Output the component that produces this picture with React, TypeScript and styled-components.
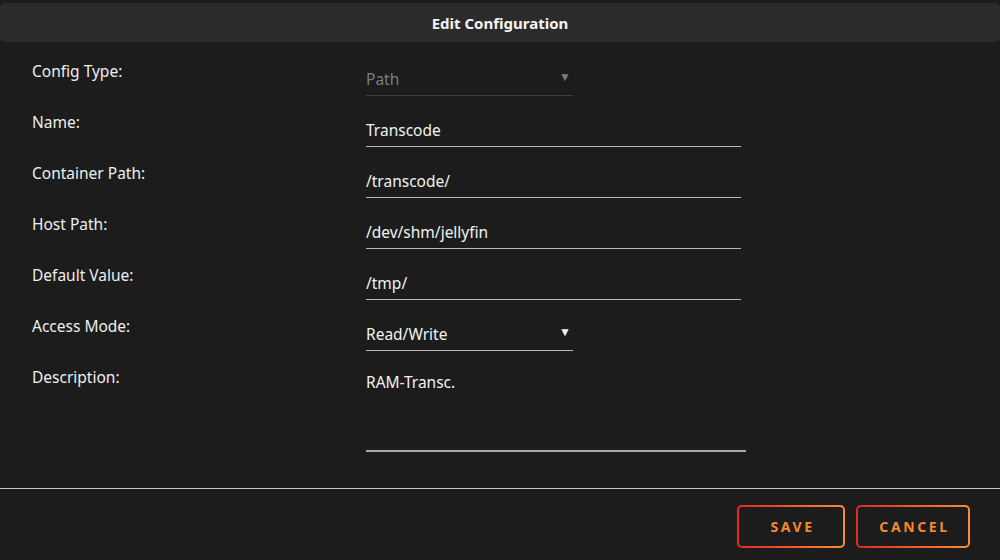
import React from "react";
import styled, { createGlobalStyle } from "styled-components";

const Global = createGlobalStyle`
  html, body { margin: 0; padding: 0; background: #1c1c1c; }
  body { font-family: "Noto Sans", "Open Sans", sans-serif; color: #f2f2f2; }
  * { box-sizing: border-box; }
`;

const Page = styled.div`
  width: 1000px;
  height: 560px;
  background: #1c1c1c;
  padding-top: 3px;
  display: flex;
  flex-direction: column;
`;

const Header = styled.div`
  height: 39px;
  background: #2b2b2b;
  border-radius: 5px;
  display: flex;
  align-items: center;
  justify-content: center;
  font-size: 15px;
  font-weight: 700;
  color: #f4f4f4;
`;

const Form = styled.div`
  padding: 20px 0 0 32px;
  display: flex;
  flex-direction: column;
  gap: 17px;
`;

const Row = styled.div`
  display: grid;
  grid-template-columns: 334px auto;
  align-items: start;
`;

const Label = styled.div`
  font-size: 15.5px;
  line-height: 18px;
  color: #eeeeee;
`;

const Field = styled.div<{ $w: number; $disabled?: boolean }>`
  width: ${(p) => p.$w}px;
  height: 34px;
  border-bottom: 1px solid ${(p) => (p.$disabled ? "#3e3e3e" : "#b8b8b8")};
  display: flex;
  align-items: center;
  justify-content: space-between;
  font-size: 15.5px;
  line-height: 20px;
  color: ${(p) => (p.$disabled ? "#7c7c7c" : "#f2f2f2")};
`;

const Arrow = styled.span<{ $disabled?: boolean }>`
  font-size: 12px;
  margin-right: 2px;
  margin-top: -3px;
  color: ${(p) => (p.$disabled ? "#7c7c7c" : "#f2f2f2")};
`;

const TextArea = styled.div`
  width: 380px;
  height: 84px;
  border-bottom: 2px solid #a8a8a8;
  padding-top: 4px;
  font-size: 15.5px;
  line-height: 20px;
  color: #f2f2f2;
`;

const Footer = styled.div`
  margin-top: 36px;
  border-top: 1px solid #c8c8c8;
  padding: 16px 30px 0 0;
  display: flex;
  justify-content: flex-end;
  gap: 11px;
`;

const Button = styled.button<{ $w: number }>`
  width: ${(p) => p.$w}px;
  height: 43px;
  border: 2px solid transparent;
  border-radius: 5px;
  background: linear-gradient(#1c1c1c, #1c1c1c) padding-box,
    linear-gradient(90deg, #e22828, #ff8c2f) border-box;
  color: #f5892f;
  font-family: "Noto Sans", sans-serif;
  font-size: 14px;
  font-weight: 700;
  letter-spacing: 2.6px;
  padding: 0 0 0 3px;
  cursor: pointer;
`;

const fields: { label: string; value: string; w: number; select?: boolean; disabled?: boolean }[] = [
  { label: "Config Type:", value: "Path", w: 207, select: true, disabled: true },
  { label: "Name:", value: "Transcode", w: 375 },
  { label: "Container Path:", value: "/transcode/", w: 375 },
  { label: "Host Path:", value: "/dev/shm/jellyfin", w: 375 },
  { label: "Default Value:", value: "/tmp/", w: 375 },
  { label: "Access Mode:", value: "Read/Write", w: 207, select: true },
];

export default function App() {
  return (
    <Page>
      <Global />
      <Header>Edit Configuration</Header>
      <Form>
        {fields.map((f) => (
          <Row key={f.label}>
            <Label>{f.label}</Label>
            <Field $w={f.w} $disabled={f.disabled}>
              <span>{f.value}</span>
              {f.select && <Arrow $disabled={f.disabled}>▼</Arrow>}
            </Field>
          </Row>
        ))}
        <Row>
          <Label>Description:</Label>
          <TextArea>RAM-Transc.</TextArea>
        </Row>
      </Form>
      <Footer>
        <Button $w={108}>SAVE</Button>
        <Button $w={114}>CANCEL</Button>
      </Footer>
    </Page>
  );
}
